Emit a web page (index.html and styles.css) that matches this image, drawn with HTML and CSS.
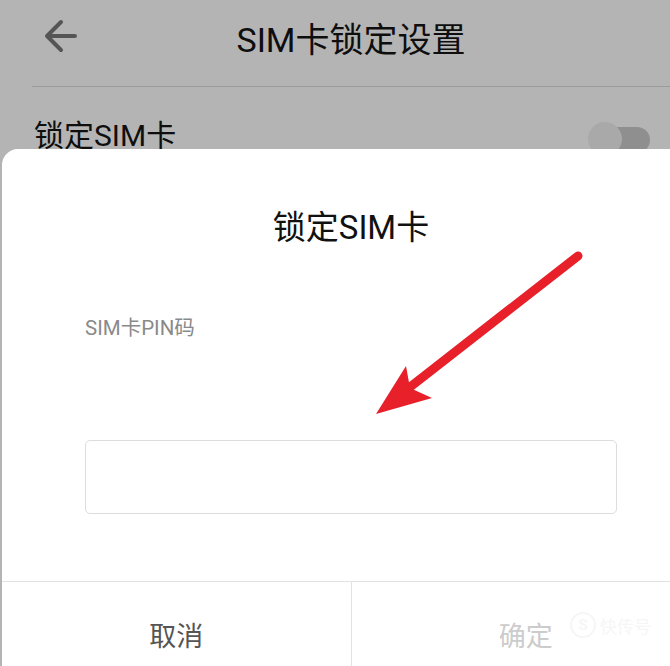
FILE: index.html
```html
<!DOCTYPE html>
<html lang="zh-CN">
<head>
    <meta charset="UTF-8">
    <meta name="viewport" content="width=device-width, initial-scale=1.0">
    <title>SIM卡锁定设置</title>
    <link rel="stylesheet" href="styles.css">
</head>
<body>
<div class="screen">
    <header class="topbar">
        <button class="back-btn" aria-label="返回">
            <svg width="36" height="34" viewBox="0 0 36 34">
                <path d="M32 17H4M18 3L4 17l14 14" fill="none" stroke="#555" stroke-width="4" stroke-linecap="round" stroke-linejoin="round"/>
            </svg>
        </button>
        <h1>SIM卡锁定设置</h1>
    </header>
    <div class="line"></div>
    <div class="setting-row">
        <span>锁定SIM卡</span>
        <div class="switch"><div class="knob"></div></div>
    </div>

    <!-- dialog sits over the page -->
    <div class="dialog">
        <h2>锁定SIM卡</h2>
        <p class="field-label">SIM卡PIN码</p>
        <div class="pin-input"></div>
        <div class="dialog-footer">
            <button class="btn-cancel">取消</button>
            <button class="btn-ok">确定</button>
        </div>
        <div class="watermark"><span class="wm-logo">S</span><span>快传号</span></div>
    </div>

    <svg class="pointer" width="702" height="666" viewBox="0 0 702 666">
        <line x1="578" y1="256" x2="405" y2="391" stroke="#e8202a" stroke-width="9" stroke-linecap="round"/>
        <polygon points="376,414 406,366 410,388 432,398" fill="#e8202a"/>
    </svg>
</div>
</body>
</html>
```

FILE: styles.css
```css
/* SIM lock dialog */
body {
    margin: 0;
    width: 670px;
    height: 666px;
    overflow: hidden;
    background: #b4b4b4;
    font-family: Roboto, "Noto Sans CJK SC", sans-serif;
}

.screen {
    position: relative;
    width: 702px;
    height: 666px;
    overflow: hidden;
    background: #b4b4b4;
}

.topbar {
    position: relative;
    display: flex;
    align-items: center;
    justify-content: center;
    height: 74px;
}

.topbar h1 {
    margin: 0;
    font-size: 34px;
    font-weight: 400;
    color: #0e0e0e;
}

.back-btn {
    position: absolute;
    left: 43px;
    top: 19px;
    padding: 0;
    border: none;
    background: none;
    display: flex;
}

.line {
    margin: 12px 0 0 32px;
    border-top: 1px solid #9c9c9c;
}

.setting-row {
    display: flex;
    align-items: center;
    justify-content: space-between;
    height: 96px;
    padding: 0 52px 0 34px;
    font-size: 30px;
    color: #0e0e0e;
}

.setting-row span {
    margin-top: -4px;
}

.switch {
    position: relative;
    width: 50px;
    height: 26px;
    border-radius: 13px;
    background: #8f8f8f;
    margin-top: 10px;
}

.knob {
    position: absolute;
    left: -12px;
    top: -5px;
    width: 34px;
    height: 34px;
    border-radius: 50%;
    background: #a9a9a9;
}

.dialog {
    position: absolute;
    left: 2px;
    top: 149px;
    bottom: 0;
    width: 698px;
    overflow: hidden;
    background: #ffffff;
    border-radius: 16px 16px 0 0;
    display: flex;
    flex-direction: column;
}

.dialog h2 {
    margin: 59px 0 0;
    line-height: 40px;
    text-align: center;
    font-size: 33px;
    font-weight: 400;
    color: #111111;
}

.field-label {
    margin: 68px 83px 0;
    line-height: 24px;
    font-size: 20.5px;
    color: #8a8a8a;
}

.pin-input {
    flex-shrink: 0;
    margin: 100px 83px 0;
    height: 72px;
    border: 1px solid #dddddd;
    border-radius: 5px;
}

.dialog-footer {
    flex-shrink: 0;
    display: flex;
    margin-top: 67px;
    border-top: 1px solid #e2e2e2;
}

.dialog-footer button {
    flex: 1;
    height: 104px;
    border: none;
    background: none;
    font-family: Roboto, "Noto Sans CJK SC", sans-serif;
    font-size: 27px;
}

.btn-cancel {
    color: #555555;
    border-right: 1px solid #e2e2e2 !important;
}

.btn-ok {
    color: #cccccc;
}

.watermark {
    position: absolute;
    left: 568px;
    top: 463px;
    display: flex;
    align-items: center;
    gap: 4px;
    font-size: 17px;
    color: #f6f6f6;
}

.wm-logo {
    width: 22px;
    height: 22px;
    border-radius: 50%;
    border: 2px solid #f6f6f6;
    text-align: center;
    line-height: 22px;
    font-weight: 700;
    font-size: 15px;
}

.pointer {
    position: absolute;
    left: 0;
    top: 0;
}
```
